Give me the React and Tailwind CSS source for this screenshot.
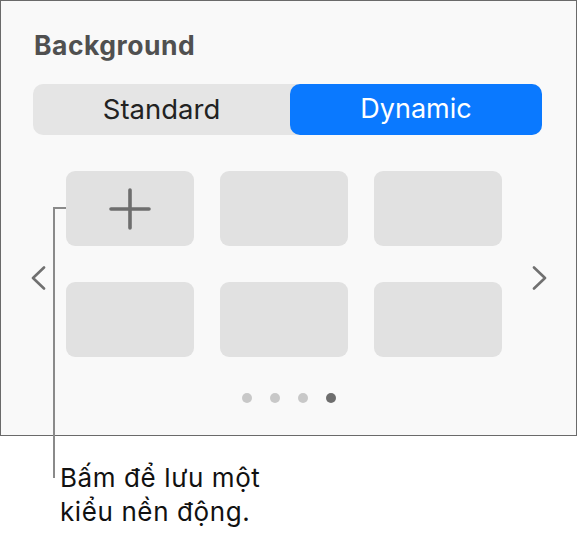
import React from "react";

function Chevron({ dir }) {
  return (
    <svg width="15" height="24" viewBox="0 0 15 24" fill="none">
      <path
        d={dir === "left" ? "M13 1.5 L2 12 L13 22.5" : "M2 1.5 L13 12 L2 22.5"}
        stroke="#707070"
        strokeWidth="2.6"
        strokeLinecap="round"
        strokeLinejoin="round"
      />
    </svg>
  );
}

function Tile({ children }) {
  return (
    <div className="w-[128px] h-[75px] rounded-[9px] bg-[#e1e1e1] flex items-center justify-center">
      {children}
    </div>
  );
}

export default function App() {
  const font = { fontFamily: "Inter, 'Noto Sans', sans-serif" };
  return (
    <div className="relative w-[577px] h-[537px] bg-white" style={font}>
      <div className="h-[436px] border border-[#6a6a6a] bg-[#f9f9f9] flex flex-col">
        <div className="pl-[33px] pt-[28px] text-[26.5px] leading-[32px] font-bold text-[#505050] tracking-[0.5px]">
          Background
        </div>
        <div className="mt-[23px] ml-[32px] mr-[34px] h-[51px] rounded-[10px] bg-[#e5e5e5] flex">
          <div className="flex-1 flex items-center justify-center text-[27.5px] text-[#222222]">
            Standard
          </div>
          <div className="w-[252px] rounded-[10px] bg-[#0a79ff] flex items-center justify-center text-[27px] text-white">
            Dynamic
          </div>
        </div>
        <div className="mt-[36px] flex items-start">
          <div className="w-[65px] pl-[30px] pt-[95px]">
            <Chevron dir="left" />
          </div>
          <div className="grid grid-cols-[128px_128px_128px] gap-x-[26px] gap-y-[36px]">
            <Tile>
              <svg width="44" height="44" viewBox="0 0 44 44">
                <path d="M3 22 H41 M22 3 V41" stroke="#6e6e6e" strokeWidth="3.6" strokeLinecap="round" />
              </svg>
            </Tile>
            <Tile />
            <Tile />
            <Tile />
            <Tile />
            <Tile />
          </div>
          <div className="pl-[30px] pt-[95px]">
            <Chevron dir="right" />
          </div>
        </div>
        <div className="mt-[36px] flex justify-center gap-[18px]">
          <div className="w-[10px] h-[10px] rounded-full bg-[#c8c8c8]" />
          <div className="w-[10px] h-[10px] rounded-full bg-[#c8c8c8]" />
          <div className="w-[10px] h-[10px] rounded-full bg-[#c8c8c8]" />
          <div className="w-[10px] h-[10px] rounded-full bg-[#6e6e6e]" />
        </div>
      </div>
      <div className="pl-[60px] pt-[25px] text-[26px] leading-[34px] tracking-[0.6px] text-[#111111]">
        <div>Bấm để lưu một</div>
        <div>kiểu nền động.</div>
      </div>
      <div className="absolute left-[53px] top-[207px] w-[13px] h-[2px] bg-[#8a8a8a]" />
      <div className="absolute left-[53px] top-[207px] w-[2px] h-[271px] bg-[#8a8a8a]" />
    </div>
  );
}
